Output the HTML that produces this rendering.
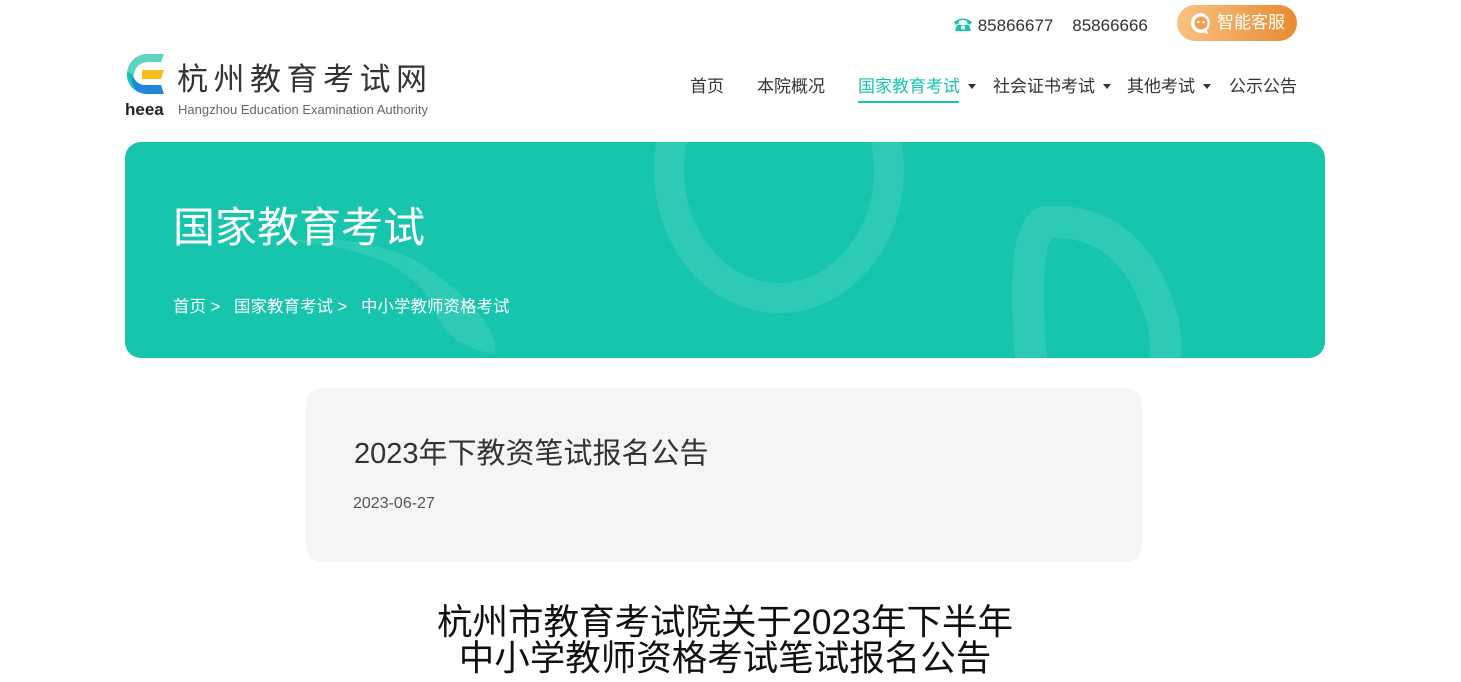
<!DOCTYPE html>
<html><head><meta charset="utf-8"><style>
*{margin:0;padding:0;box-sizing:border-box}
body{width:1461px;height:682px;overflow:hidden;background:#fff;font-family:"Liberation Sans","Noto Sans CJK SC",sans-serif;position:relative;color:#333}
.abs{position:absolute;white-space:nowrap}
.nav{top:75px;font-size:17px;color:#333;line-height:24px}
.tri{display:inline-block;width:0;height:0;border-left:4px solid transparent;border-right:4px solid transparent;border-top:5px solid #333;vertical-align:middle;margin-left:8px;margin-top:-3px}
</style></head><body>
<!-- top bar -->
<div class="abs" style="left:953px;top:14px;font-size:17px;line-height:24px;color:#333">
<svg width="20" height="16" viewBox="0 0 20 16" style="vertical-align:-1px"><path d="M1 6 Q10 -1 19 6 L17 9 L14 7 L14 5 Q10 3 6 5 L6 7 L3 9Z" fill="#17c4ac"/><path d="M4 9 L16 9 L18 15 L2 15Z" fill="#17c4ac"/><circle cx="10" cy="11.5" r="2" fill="#fff"/></svg>
85866677&nbsp;&nbsp;&nbsp; 85866666</div>
<div class="abs" style="left:1177px;top:5px;width:120px;height:36px;border-radius:18px;background:linear-gradient(90deg,#f8c283,#e88a30);color:#fff;font-size:17px;line-height:36px;padding-left:40px">智能客服
<svg width="24" height="24" viewBox="0 0 24 24" style="position:absolute;left:12px;top:6px"><path d="M12 2a10 10 0 1 0 3 19.5L19 23l-1-4A10 10 0 0 0 12 2z" fill="#fff"/><circle cx="12" cy="12" r="6.5" fill="#f0a04e"/><circle cx="9.5" cy="11" r="1.3" fill="#fff"/><circle cx="14.5" cy="11" r="1.3" fill="#fff"/></svg></div>
<!-- logo -->
<svg class="abs" style="left:124px;top:52px" width="42" height="44" viewBox="0 0 42 44">
<path d="M40 2 H22 A20 20 0 0 0 3 22 A20 20 0 0 0 14 40 A18 18 0 0 1 10 22 A14 14 0 0 1 24 10 H37 Z" fill="#5fd3c2"/>
<path d="M3 22 A20 20 0 0 0 22 42 H40 L37 33 H22 A13 13 0 0 1 9 24 Z" fill="#1f86d9"/>
<path d="M3 20 A20 20 0 0 0 12 38 A16 16 0 0 1 9 22Z" fill="#17c4ac"/>
<path d="M18 18 H40 L37 27 H18 Z" fill="#f7bd1b"/>
</svg>
<div class="abs" style="left:125px;top:100px;font-size:17px;font-weight:bold;color:#222;line-height:20px">heea</div>
<div class="abs" style="left:177px;top:60px;font-size:31px;line-height:40px;color:#333;letter-spacing:5.5px">杭州教育考试网</div>
<div class="abs" style="left:178px;top:102px;font-size:13px;line-height:16px;color:#666">Hangzhou Education Examination Authority</div>
<!-- nav -->
<div class="abs nav" style="left:690px">首页</div>
<div class="abs nav" style="left:757px">本院概况</div>
<div class="abs nav" style="left:858px;color:#17c4ac">国家教育考试<span class="tri"></span></div>
<div class="abs" style="left:858px;top:101px;width:101px;height:2px;background:#17c4ac"></div>
<div class="abs nav" style="left:993px">社会证书考试<span class="tri"></span></div>
<div class="abs nav" style="left:1127px">其他考试<span class="tri"></span></div>
<div class="abs nav" style="left:1229px">公示公告</div>
<!-- banner -->
<div class="abs" style="left:125px;top:142px;width:1200px;height:216px;border-radius:16px;background:#17c4ac;overflow:hidden">
<svg width="1200" height="216" style="position:absolute;left:0;top:0">
<ellipse cx="654" cy="28" rx="110" ry="128" fill="none" stroke="#2dcbb4" stroke-width="30"/>
<path d="M907 232 Q895 90 920 80 Q1010 75 1038 180 Q1045 220 1035 240" fill="none" stroke="#2dcbb4" stroke-width="32"/>
<path d="M155 100 Q210 100 260 120 Q300 140 310 170 Q325 205 370 212 Q372 195 360 180 Q340 150 290 118 Q230 90 155 100Z" fill="#2dcbb4"/>
</svg>
<div class="abs" style="left:48px;top:60px;font-size:42px;line-height:52px;color:#fff">国家教育考试</div>
<div class="abs" style="left:48px;top:153px;font-size:16.5px;line-height:24px;color:#fff">首页 &gt;&nbsp;&nbsp; 国家教育考试 &gt;&nbsp;&nbsp; 中小学教师资格考试</div>
</div>
<!-- card -->
<div class="abs" style="left:306px;top:388px;width:836px;height:174px;border-radius:16px;background:#f5f5f5"></div>
<div class="abs" style="left:354px;top:436px;font-size:29px;line-height:36px;color:#333">2023年下教资笔试报名公告</div>
<div class="abs" style="left:353px;top:494px;font-size:16px;line-height:20px;color:#555">2023-06-27</div>
<div class="abs" style="left:0;width:1450px;top:604px;text-align:center;font-size:35.5px;line-height:36px;color:#111">杭州市教育考试院关于2023年下半年<br>中小学教师资格考试笔试报名公告</div>
</body></html>
